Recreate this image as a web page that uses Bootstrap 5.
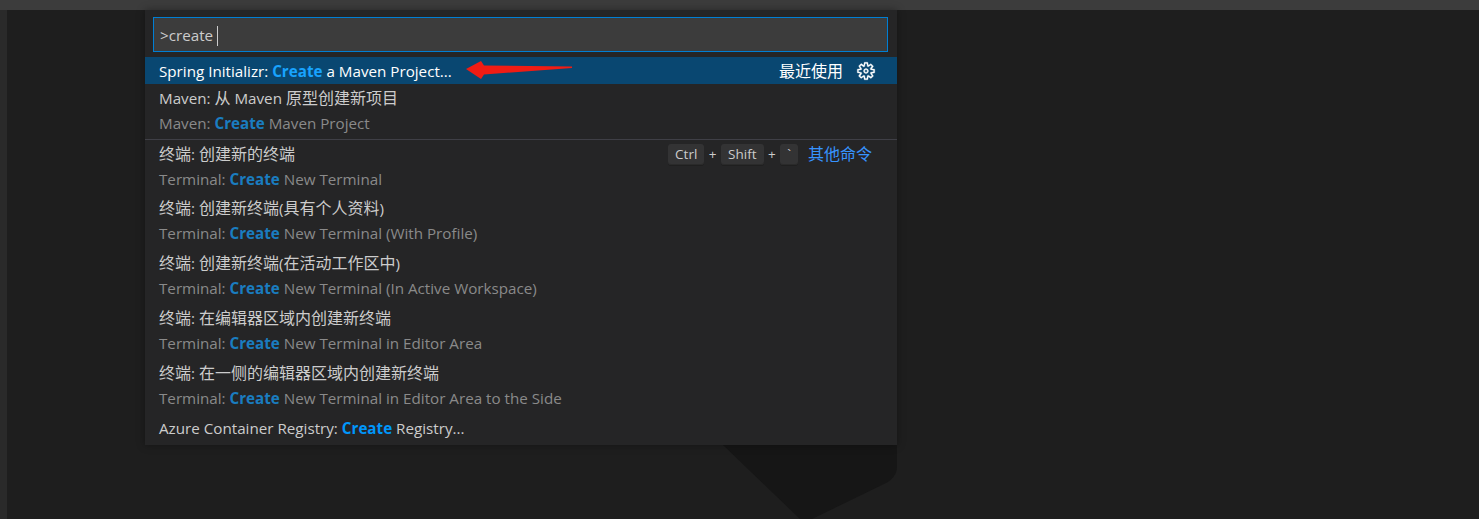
<!DOCTYPE html>
<html lang="zh-CN">
<head>
	<meta charset="UTF-8" />
	<meta name="viewport" content="width=device-width, initial-scale=1.0" />
	<title>Command Palette</title>

	<link href="https://cdn.jsdelivr.net/npm/bootstrap@5.3.0/dist/css/bootstrap.min.css" rel="stylesheet" />
	<script src="https://cdn.jsdelivr.net/npm/bootstrap@5.3.0/dist/js/bootstrap.bundle.min.js"></script>

	<style>
		html, body { height: 519px; overflow: hidden; }
		body {
			background: #1e1e1e;
			color: #cccccc;
			font-family: "Open Sans", "Noto Sans CJK SC", sans-serif;
			font-size: 15.2px;
		}
		.zh { font-size: 16px; }
		.title-strip { height: 10px; background: #3c3c3c; }
		.work-area { height: 509px; }
		.activity-strip { width: 7px; background: #2a2a2a; }
		.editor-area { background: #1e1e1e; }
		.watermark { position: absolute; left: 0; top: 0; }

		.palette {
			position: absolute;
			left: 145px;
			top: 10px;
			width: 752px;
			height: 435px;
			background: #252526;
			box-shadow: 0 0 8px rgba(0, 0, 0, .36);
		}
		.palette-input {
			height: 35px;
			margin: 7px 9px 5px 8px;
			padding-left: 6px;
			background: #3c3c3c;
			border: 1px solid #007fd4;
			line-height: 34px;
		}
		.caret-mark {
			display: inline-block;
			width: 1px;
			height: 20px;
			margin-left: 4px;
			background: #cccccc;
			vertical-align: -5px;
		}

		.cmd-list { --bs-list-group-bg: transparent; --bs-list-group-color: #cccccc; border-radius: 0; }
		.cmd-list .list-group-item {
			padding: 2px 24px 3px 14px;
			border: 0;
			line-height: 25px;
		}
		.cmd-list .list-group-item.picked { background: #094771; color: #ffffff; height: 27px; padding-top: 2px; padding-bottom: 0; }
		.cmd-list .list-group-item.split { border-top: 1px solid #3f3f46; padding-top: 2px; padding-bottom: 2px; }
		.cmd-list .list-group-item.single { height: 30px; }
		.hit { color: #0097fb; font-weight: 700; }
		.picked .hit { color: #18a3ff; }
		.desc { color: #8a8a8a; }
		.desc .hit { color: #1a7dc0; }
		.recent-label { margin-right: 12.5px; }
		.gear-icon { width: 20px; height: 20px; fill: #ffffff; stroke: #ffffff; stroke-width: .25; margin-right: -2.5px; margin-top: -2px; }
		.key-cap {
			display: inline-block;
			height: 21px;
			padding: 0 7px;
			background: #333334;
			border-radius: 3px;
			box-shadow: inset 0 -1px 0 #2a2a2a, 0 1px 0 #1f1f1f;
			font-size: 13.5px;
			line-height: 21px;
		}
		.key-plus { margin: 0 4.5px; font-size: 13.5px; }
		.more-link { color: #3794ff; margin-left: 10px; margin-right: 1px; text-decoration: none; }
		.red-arrow { position: absolute; left: 465px; top: 59px; }
	</style>
</head>

<body>
	<div class="title-strip"></div>
	<div class="work-area d-flex">
		<div class="activity-strip"></div>
		<div class="editor-area flex-grow-1"></div>
	</div>

	<svg class="watermark" width="1479" height="519">
		<path d="M723 445 L800 519 L812 519 L884 484 Q897 478 897 466 L897 445 Z" fill="#161616" />
	</svg>

	<div class="palette">
		<div class="palette-input">&gt;create<span class="caret-mark"></span></div>
		<div class="list-group cmd-list">
			<div class="list-group-item picked d-flex align-items-center">
				<span class="flex-grow-1">Spring Initializr: <span class="hit">Create</span> a Maven Project...</span>
				<span class="recent-label zh">最近使用</span>
				<svg class="gear-icon" viewBox="0 0 16 16"><path fill-rule="evenodd" clip-rule="evenodd" d="M9.1 4.4L8.6 2H7.4l-.5 2.4-.7.3-2-1.3-.9.8 1.3 2-.2.7-2.4.5v1.2l2.4.5.3.8-1.3 2 .8.8 2-1.3.8.3.4 2.3h1.2l.5-2.4.8-.3 2 1.3.8-.8-1.3-2 .3-.8 2.3-.4V7.4l-2.4-.5-.3-.8 1.3-2-.8-.8-2 1.3-.7-.2zM9.4 1l.5 2.4L12 2.1l2 2-1.4 2.1 2.4.4v2.8l-2.4.5L14 12l-2 2-2.1-1.4-.5 2.4H6.6l-.5-2.4L4 13.9l-2-2 1.4-2.1L1 9.4V6.6l2.4-.5L2.1 4l2-2 2.1 1.4.4-2.4h2.8zm.6 7c0 1.1-.9 2-2 2s-2-.9-2-2 .9-2 2-2 2 .9 2 2zM8 9c.6 0 1-.4 1-1s-.4-1-1-1-1 .4-1 1 .4 1 1 1z"/></svg>
			</div>
			<div class="list-group-item">
				<div>Maven: <span class="zh">从</span> Maven <span class="zh">原型创建新项目</span></div>
				<div class="desc">Maven: <span class="hit">Create</span> Maven Project</div>
			</div>
			<div class="list-group-item split">
				<div class="d-flex align-items-center">
					<span class="flex-grow-1"><span class="zh">终端</span>: <span class="zh">创建新的终端</span></span>
					<span class="key-cap">Ctrl</span><span class="key-plus">+</span><span class="key-cap">Shift</span><span class="key-plus">+</span><span class="key-cap">`</span>
					<a class="more-link zh" href="#">其他命令</a>
				</div>
				<div class="desc">Terminal: <span class="hit">Create</span> New Terminal</div>
			</div>
			<div class="list-group-item">
				<div><span class="zh">终端</span>: <span class="zh">创建新终端</span>(<span class="zh">具有个人资料</span>)</div>
				<div class="desc">Terminal: <span class="hit">Create</span> New Terminal (With Profile)</div>
			</div>
			<div class="list-group-item">
				<div><span class="zh">终端</span>: <span class="zh">创建新终端</span>(<span class="zh">在活动工作区中</span>)</div>
				<div class="desc">Terminal: <span class="hit">Create</span> New Terminal (In Active Workspace)</div>
			</div>
			<div class="list-group-item">
				<div><span class="zh">终端</span>: <span class="zh">在编辑器区域内创建新终端</span></div>
				<div class="desc">Terminal: <span class="hit">Create</span> New Terminal in Editor Area</div>
			</div>
			<div class="list-group-item">
				<div><span class="zh">终端</span>: <span class="zh">在一侧的编辑器区域内创建新终端</span></div>
				<div class="desc">Terminal: <span class="hit">Create</span> New Terminal in Editor Area to the Side</div>
			</div>
			<div class="list-group-item single">Azure Container Registry: <span class="hit">Create</span> Registry...</div>
		</div>
	</div>

	<svg class="red-arrow" width="110" height="22" viewBox="465 59 110 22">
		<path d="M466 69 L481 61 L484 65.5 L572 66.5 L572 68 L484 74.5 L481 79 Z" fill="#f01c14" />
	</svg>
</body>
</html>
